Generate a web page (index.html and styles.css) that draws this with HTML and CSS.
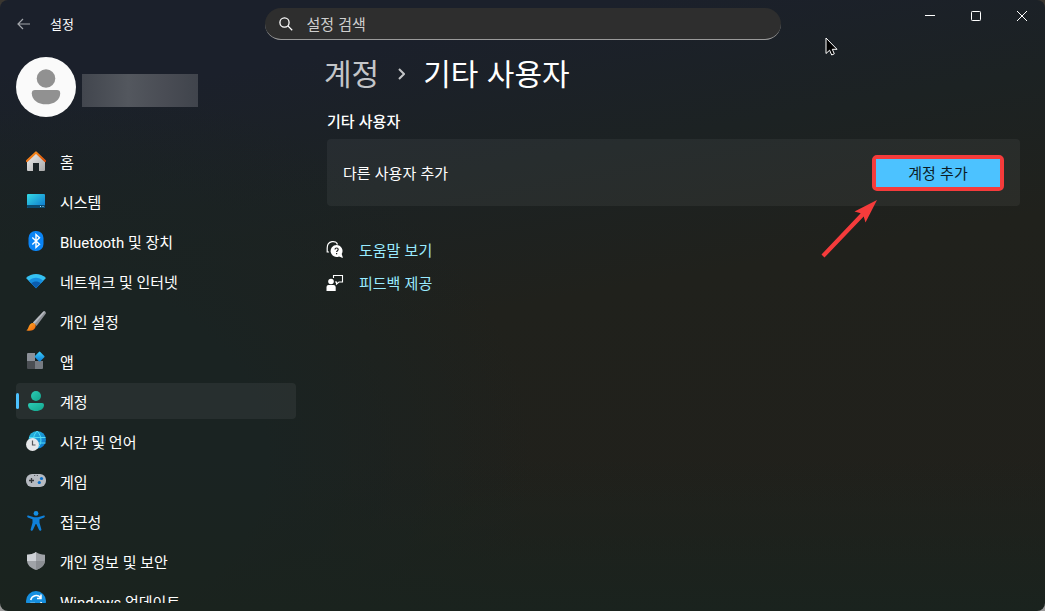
FILE: index.html
```
<!DOCTYPE html>
<html lang="ko">
<head>
    <meta charset="UTF-8">
    <meta name="viewport" content="width=device-width, initial-scale=1.0">
    <title>설정</title>

    <link rel="stylesheet" href="styles.css">
</head>
<body>
    <div class="window">
        <header class="titlebar">
            <div class="titleLeft">
                <button class="backButton" aria-label="뒤로">
                    <svg width="14" height="12" viewBox="0 0 14 12" fill="none" stroke="#a3a6ab" stroke-width="1.2"><path d="M13 6H1M6 1L1 6l5 5"/></svg>
                </button>
                <span class="appName">설정</span>
            </div>
            <form class="search">
                <svg width="14" height="14" viewBox="0 0 14 14" fill="none" stroke="#fff" stroke-width="1.3"><circle cx="5.5" cy="5.5" r="4.6"/><path d="M8.9 8.9l4.3 4.3"/></svg>
                <input type="text" placeholder="설정 검색" aria-label="설정 검색">
            </form>
            <div class="windowButtons">
                <button aria-label="최소화"><svg width="10" height="10" viewBox="0 0 10 10"><path d="M0 4.5h10" stroke="#fff"/></svg></button>
                <button aria-label="최대화"><svg width="10" height="10" viewBox="0 0 10 10"><rect x=".5" y=".5" width="9" height="9" rx=".8" fill="none" stroke="#fff"/></svg></button>
                <button aria-label="닫기"><svg width="10" height="10" viewBox="0 0 10 10"><path d="M0 0l10 10M10 0L0 10" stroke="#fff"/></svg></button>
            </div>
        </header>

        <div class="columns">
            <aside class="sidebar">
                <div class="user">
                    <svg class="avatar" width="60" height="60" viewBox="0 0 60 60">
                        <circle cx="30" cy="30" r="30" fill="#fafafa"/>
                        <circle cx="30" cy="21.500" r="9.300" fill="#919191"/>
                        <path d="M19 33h22a3.200 3.200 0 0 1 3.200 3.200C44.200 43 38 47.300 30 47.300S15.800 43 15.800 36.200A3.200 3.200 0 0 1 19 33z" fill="#919191"/>
                    </svg>
                    <div class="userName"></div>
                </div>

                <nav class="menu">
                    <a href="#home">
                        <svg width="20" height="20" viewBox="0 0 20 20">
                            <defs>
                                <linearGradient id="wall" x1="0" y1="0" x2="1" y2="1"><stop offset="0" stop-color="#f0f0f0"/><stop offset="1" stop-color="#a8a8a8"/></linearGradient>
                                <linearGradient id="roof" x1="0" y1="0" x2="1" y2="1"><stop offset="0" stop-color="#ff9a1f"/><stop offset="1" stop-color="#d64a08"/></linearGradient>
                            </defs>
                            <path d="M1 9l9-7.500L19 9v10a1 1 0 0 1-1 1h-5v-8H7v8H2a1 1 0 0 1-1-1z" fill="url(#wall)"/>
                            <path d="M.9 10L10 1.500 19.100 10" fill="none" stroke="url(#roof)" stroke-width="2.200" stroke-linecap="round" stroke-linejoin="round"/>
                        </svg>
                        <span>홈</span>
                    </a>
                    <a href="#system">
                        <svg width="20" height="20" viewBox="0 0 20 20">
                            <defs><linearGradient id="screen" x1="0" y1="0" x2="1" y2="1"><stop offset="0" stop-color="#35dbe6"/><stop offset="1" stop-color="#0b72cc"/></linearGradient></defs>
                            <rect x="1" y="3" width="18" height="14" rx="1" fill="url(#screen)"/>
                            <path d="M1 14h18v2a1 1 0 0 1-1 1H2a1 1 0 0 1-1-1z" fill="#0b4a70"/>
                            <path d="M14 15.500h1M16.500 15.500h1" stroke="#a5e3ff"/>
                        </svg>
                        <span>시스템</span>
                    </a>
                    <a href="#bluetooth">
                        <svg width="20" height="20" viewBox="0 0 20 20">
                            <rect x="2.500" y="0" width="15" height="20" rx="7" fill="#0a84f5"/>
                            <path d="M6.300 6.500l7.200 6.800L10 16.500v-13l3.500 3.200-7.200 6.800" fill="none" stroke="#fff" stroke-width="1.400"/>
                        </svg>
                        <span>Bluetooth 및 장치</span>
                    </a>
                    <a href="#network">
                        <svg width="20" height="20" viewBox="0 0 20 20">
                            <path d="M0 7C5.500 1.700 14.500 1.700 20 7L10 17.300z" fill="#35c1f2"/>
                            <path d="M2.800 9.700C7 5.800 13 5.800 17.200 9.700L10 17.300z" fill="#168de0"/>
                            <path d="M5.200 12.200C8 9.800 12 9.800 14.800 12.200L10 17.300z" fill="#0b5cae"/>
                        </svg>
                        <span>네트워크 및 인터넷</span>
                    </a>
                    <a href="#personal">
                        <svg width="20" height="20" viewBox="0 0 20 20">
                            <defs><linearGradient id="brush" x1="0" y1="0" x2="1" y2="1"><stop offset="0" stop-color="#ffae2b"/><stop offset="1" stop-color="#ee6209"/></linearGradient></defs>
                            <path d="M7 11.500L17.200.8c1.200-1.200 3.400.2 2.500 1.900L10.500 15z" fill="#8e9197"/>
                            <path d="M7 11.500L17.200.8c.6-.5 1.300-.5 1.900-.1L8.500 13z" fill="#b9bcc2"/>
                            <path d="M5.500 12.200c2.500-1 5 1.200 4 3.800C8.300 19.600 3.800 20.500.3 19.300c2.700-1 1.700-5.500 5.200-7.100z" fill="url(#brush)"/>
                        </svg>
                        <span>개인 설정</span>
                    </a>
                    <a href="#apps">
                        <svg width="20" height="20" viewBox="0 0 20 20">
                            <defs><linearGradient id="tile" x1="0" y1="0" x2="1" y2="1"><stop offset="0" stop-color="#40d0fa"/><stop offset="1" stop-color="#0878d4"/></linearGradient></defs>
                            <path d="M2 2h7v8H1V3a1 1 0 0 1 1-1z" fill="#8b9098"/>
                            <path d="M1 10h8v8H2a1 1 0 0 1-1-1z" fill="#4a4e53"/>
                            <path d="M9 10h8v7a1 1 0 0 1-1 1H9z" fill="#767b82"/>
                            <rect x="9.800" y="1.800" width="7.600" height="7.600" rx="1" transform="rotate(45 13.600 5.600)" fill="url(#tile)"/>
                        </svg>
                        <span>앱</span>
                    </a>
                    <a class="active" href="#accounts">
                        <svg width="20" height="20" viewBox="0 0 20 20">
                            <defs><linearGradient id="person" x1="0" y1="0" x2="1" y2="1"><stop offset="0" stop-color="#2ccbb5"/><stop offset="1" stop-color="#12a58c"/></linearGradient></defs>
                            <circle cx="10" cy="5" r="5" fill="url(#person)"/>
                            <path d="M4 12h12a2 2 0 0 1 2 2c0 3.700-3.600 6-8 6s-8-2.300-8-6a2 2 0 0 1 2-2z" fill="url(#person)"/>
                        </svg>
                        <span>계정</span>
                    </a>
                    <a href="#time">
                        <svg width="20" height="20" viewBox="0 0 20 20">
                            <defs><linearGradient id="globe" x1="0" y1="0" x2="1" y2="1"><stop offset="0" stop-color="#29bfe0"/><stop offset="1" stop-color="#0b6fcc"/></linearGradient></defs>
                            <circle cx="11.200" cy="8.800" r="8.800" fill="url(#globe)"/>
                            <path d="M3 6.500h16.500M3 12h16.500M11.200 0c-5 5-5 12 0 17.600 5-5 5-12 0-17.600z" fill="none" stroke="#53dcf5"/>
                            <circle cx="6.500" cy="13.500" r="6.500" fill="#e6e7e9"/>
                            <path d="M6.500 9.500v4.500h3" fill="none" stroke="#55585c" stroke-width="1.200"/>
                        </svg>
                        <span>시간 및 언어</span>
                    </a>
                    <a href="#gaming">
                        <svg width="20" height="20" viewBox="0 0 20 20">
                            <rect x="0" y="3" width="20" height="13" rx="6" fill="#b6bac1"/>
                            <path d="M3 9.500h5M5.500 7v5" stroke="#34373b" stroke-width="1.300"/>
                            <path d="M8.200 4.500h1M10.800 4.500h1" stroke="#44484d"/>
                            <circle cx="15.500" cy="7.500" r="1.600" fill="#0b6fc8"/>
                            <circle cx="13.300" cy="11.500" r="1.600" fill="#0b6fc8"/>
                        </svg>
                        <span>게임</span>
                    </a>
                    <a href="#access">
                        <svg width="20" height="20" viewBox="0 0 20 20">
                            <circle cx="10" cy="2.400" r="2.400" fill="#168fe3"/>
                            <path d="M2.300 4.400L8 6.200h4l5.700-1.800c1.300-.2 1.600 1.500.5 2L13.500 8.300v3.500l1.900 6.600c.2 1.500-1.700 2-2.300.7L10.300 13h-.6l-2.800 6.100c-.6 1.300-2.500.8-2.300-.7l1.900-6.600V8.300L1.800 6.400c-1.100-.5-.8-2.200.5-2z" fill="#0f80da"/>
                        </svg>
                        <span>접근성</span>
                    </a>
                    <a href="#privacy">
                        <svg width="20" height="20" viewBox="0 0 20 20">
                            <path d="M10 1c2.500 1.800 5.500 2.600 9 2.700V9c0 5-3.500 8-9 10C4.500 17 1 14 1 9V3.700C4.500 3.600 7.500 2.800 10 1z" fill="#a0a3a8"/>
                            <path d="M10 1v9H1V3.700C4.500 3.600 7.500 2.800 10 1z" fill="#cfd2d7"/>
                            <path d="M10 10h9c-.4 4.500-4 7.400-9 9z" fill="#8b8e93"/>
                        </svg>
                        <span>개인 정보 및 보안</span>
                    </a>
                    <a href="#update">
                        <svg width="20" height="20" viewBox="0 0 20 20">
                            <circle cx="10" cy="10" r="10" fill="#168fdf"/>
                            <path d="M4.700 9A5.600 5.600 0 0 1 14.500 6.500M15.300 11A5.600 5.600 0 0 1 5.500 13.500M15 3.500v4h-4M5 16.500v-4h4" fill="none" stroke="#fff" stroke-width="1.500"/>
                        </svg>
                        <span>Windows 업데이트</span>
                    </a>
                </nav>
            </aside>

            <main class="content">
                <h1>
                    <a href="#accounts">계정</a>
                    <svg width="8" height="16" viewBox="0 0 8 16" fill="none" stroke="#c3c5c8" stroke-width="2"><path d="M2 5l5 5-5 5"/></svg>
                    <span>기타 사용자</span>
                </h1>
                <h2>기타 사용자</h2>
                <section class="card">
                    <span>다른 사용자 추가</span>
                    <div class="highlight">
                        <button class="addButton">계정 추가</button>
                        <svg class="arrow" width="58" height="60" viewBox="0 0 58 60" fill="#f53b3b">
                            <path d="M57 1L34.500 12.500l6.200 1.800L1.500 55.500l3 3L43.700 17.500l1.800 6z"/>
                        </svg>
                    </div>
                </section>
                <div class="links">
                    <a href="#help">
                        <svg width="18" height="18" viewBox="0 0 18 18">
                            <path d="M1.200 9.500V7C1.200-.8 10.500-.8 11.500 3.500M1.200 8v3h1.800" fill="none" stroke="#fff" stroke-width="1.200"/>
                            <path d="M10.500 4a6 6 0 0 1 5.200 9l1.300 4-4-1.500A6 6 0 1 1 10.500 4z" fill="#fff"/>
                            <path d="M9 8.500c0-2 3.200-2 3.200 0 0 1.200-1.600 1.200-1.600 2.600M10.600 12v1.300" fill="none" stroke="#222" stroke-width="1.200"/>
                        </svg>
                        <span>도움말 보기</span>
                    </a>
                    <a href="#feedback">
                        <svg width="18" height="18" viewBox="0 0 18 18">
                            <circle cx="5" cy="7.500" r="2.800" fill="#fff"/>
                            <path d="M2.500 11h5A2.200 2.200 0 0 1 9.700 13v4H.5v-4a2 2 0 0 1 2-2z" fill="#fff"/>
                            <path d="M7.500 4V1.500h9v6.500h-3.500l-2.500 2V8H9" fill="none" stroke="#fff" stroke-width="1.100"/>
                        </svg>
                        <span>피드백 제공</span>
                    </a>
                </div>
            </main>
        </div>

        <svg class="cursor" width="14" height="20" viewBox="0 0 14 20"><path d="M1 1v15.500l3.600-3.300L6.700 18l2.600-1.200-2-4.500H12z" fill="#000" stroke="#fff"/></svg>
    </div>
</body>
</html>
```
FILE: styles.css
```
* {
    box-sizing: border-box;
}
html {
    background: linear-gradient(to bottom, #3a3630, #9a9a9a);
}
body {
    margin: 0;
    color: #fff;
    font-family: "Noto Sans CJK KR", sans-serif;
    font-size: 15px;
    line-height: 20px;
}
a {
    color: inherit;
    text-decoration: none;
}
button {
    padding: 0;
    border: 0;
    color: inherit;
    background: none;
    font: inherit;
}
svg {
    display: block;
    flex-shrink: 0;
}

.window {
    position: relative;
    display: flex;
    flex-direction: column;
    height: 100vh;
    padding-bottom: 8px;
    overflow: hidden;
    border-radius: 8px;
    background:
        linear-gradient(to top, #1a231e, rgba(26, 35, 30, 0) 25%),
        radial-gradient(ellipse at 0 75%, #1a2322 30%, rgba(26, 35, 34, 0) 60%) 0 0 / 60% 100% no-repeat,
        linear-gradient(170deg, #1b202b 14%, #1c2223 32%, #20211c 50%, #21201b 100%);
}

/* title bar */
.titlebar {
    display: grid;
    grid-template-columns: 1fr minmax(200px, 516px) 1fr;
    height: 48px;
}
.titleLeft {
    display: flex;
    align-items: center;
    gap: 19px;
    padding-left: 17px;
}
.appName {
    font-size: 13px;
}
.search {
    display: flex;
    align-items: center;
    gap: 14px;
    height: 32px;
    margin-top: 8px;
    padding: 0 14px;
    border-bottom: 1px solid #9a9a9a;
    border-radius: 16px;
    background: #2e2e2e;
}
.search input {
    flex: 1;
    min-width: 0;
    padding: 0;
    border: 0;
    outline: 0;
    color: #fff;
    background: none;
    font: inherit;
}
.search input::placeholder {
    color: #cecece;
}
.windowButtons {
    display: flex;
    justify-content: flex-end;
}
.windowButtons button {
    display: grid;
    place-items: center;
    width: 46px;
    height: 32px;
}

.columns {
    display: flex;
    flex: 1;
    gap: 31px;
    min-height: 0;
    padding: 0 25px 0 16px;
}

/* left side */
.sidebar {
    display: flex;
    flex-direction: column;
    flex: 0 0 280px;
    padding-top: 9px;
}
.user {
    display: flex;
    align-items: center;
    gap: 6px;
    margin-bottom: 26px;
}
.userName {
    width: 116px;
    height: 33px;
    margin-top: 7px;
    background: linear-gradient(to right, #42464e, #53575e 40%, #4a4d55 70%, #40444c);
}
.menu {
    flex: 1;
    min-height: 0;
    overflow: hidden;
    font-family: Roboto, "Noto Sans CJK KR", sans-serif;
}
.menu a {
    position: relative;
    display: flex;
    align-items: center;
    gap: 14px;
    height: 36px;
    margin-bottom: 4px;
    padding: 0 10px;
    border-radius: 4px;
}
.menu span {
    padding-top: 4px;
}
.menu a.active {
    background: rgba(255, 255, 255, 0.06);
}
.menu a.active::before {
    content: "";
    position: absolute;
    left: 0;
    top: 10px;
    width: 3px;
    height: 16px;
    border-radius: 2px;
    background: #4cc2ff;
}

/* right side */
.content {
    flex: 1;
    min-width: 0;
}
h1 {
    display: flex;
    align-items: center;
    gap: 18px;
    margin: 3px 0 18px -3px;
    font-size: 30px;
    line-height: 42px;
    font-weight: 400;
}
h1 a {
    color: #c3c5c8;
}
h2 {
    margin: 0;
    padding-bottom: 8px;
    font-size: 15px;
    line-height: 20px;
    font-weight: 500;
}
.card {
    display: flex;
    align-items: center;
    justify-content: space-between;
    height: 67px;
    margin-bottom: 34px;
    padding: 0 16px;
    border-radius: 4px;
    background: rgba(255, 255, 255, 0.05);
}
.highlight {
    position: relative;
    border: 4px solid #f53b3b;
    border-radius: 5px;
}
.addButton {
    display: block;
    width: 124px;
    height: 28px;
    color: #0b1c26;
    background: #4cc2ff;
}
.arrow {
    position: absolute;
    left: -56px;
    top: 40px;
}
.links a {
    display: flex;
    align-items: center;
    gap: 15px;
    height: 20px;
    margin: 0 0 13px -1px;
    color: #99ebff;
}

.cursor {
    position: absolute;
    left: 825px;
    top: 37px;
}
```
